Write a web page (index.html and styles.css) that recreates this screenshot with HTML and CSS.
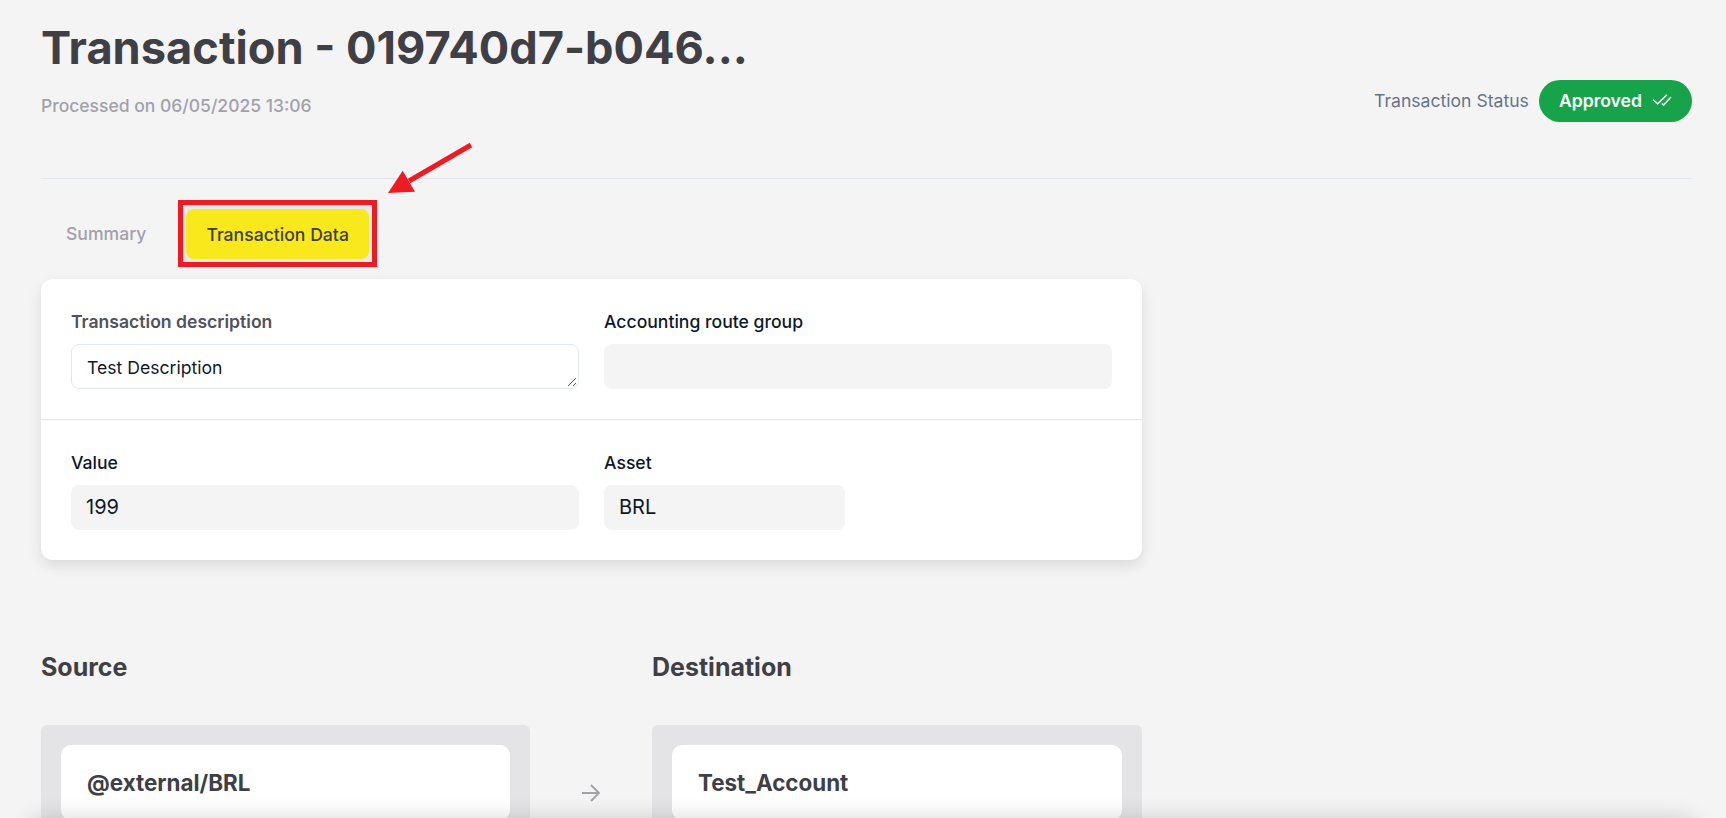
FILE: index.html
```html
<!DOCTYPE html>
<html lang="en">
<head>
<meta charset="utf-8">
<title>Transaction</title>
<link rel="stylesheet" href="styles.css">
</head>
<body>
<main class="page">
  <header class="header">
    <div class="header-main">
      <h1 class="title">Transaction - 019740d7-b046...</h1>
      <p class="processed">Processed on 06/05/2025 13:06</p>
    </div>
    <div class="status">
      <span class="status-label">Transaction Status</span>
      <span class="pill">Approved
        <svg class="pill-icon" viewBox="0 0 20 14" fill="none" stroke="#fff" stroke-width="1.5"><path d="M1 6.7L5.7 10.7L15 1.7"/><path d="M9.7 10.7L11.7 12L19 4"/></svg>
      </span>
    </div>
  </header>
  <nav class="tabs">
    <span class="tab">Summary</span>
    <span class="tab-mark"><span class="tab tab-active">Transaction Data</span></span>
  </nav>
  <section class="card">
    <div class="card-row">
      <div class="field">
        <label class="label label-muted">Transaction description</label>
        <div class="textarea">Test Description
          <svg class="grip" viewBox="0 0 10 10" fill="none" stroke="#555" stroke-width="1"><path d="M1 9l8-8M6 9l3-3"/></svg>
        </div>
      </div>
      <div class="field">
        <label class="label">Accounting route group</label>
        <div class="input input-tall"></div>
      </div>
    </div>
    <div class="card-row card-row-bottom">
      <div class="field">
        <label class="label">Value</label>
        <div class="input">199</div>
      </div>
      <div class="field">
        <label class="label">Asset</label>
        <div class="input input-short">BRL</div>
      </div>
    </div>
  </section>
  <section class="flow">
    <div class="flow-col">
      <h2 class="flow-title">Source</h2>
      <div class="panel"><div class="account">@external/BRL</div></div>
    </div>
    <div class="flow-arrow">
      <svg viewBox="0 0 18 18" fill="none" stroke="#a1a1aa" stroke-width="1.8" class="arrow-icon"><path d="M0 9h17M9 1l8 8-8 8"/></svg>
    </div>
    <div class="flow-col flow-col-end">
      <h2 class="flow-title">Destination</h2>
      <div class="panel"><div class="account">Test_Account</div></div>
    </div>
  </section>
</main>
<div class="fade"></div>
<svg class="annot" viewBox="385 140 90 56" fill="none"><path d="M471 145L409 181" stroke="#ed1c24" stroke-width="5"/><path d="M388 193L402.7 170.7L415 191.7Z" fill="#ed1c24"/></svg>
</body>
</html>
```
FILE: styles.css
```css
* { box-sizing: border-box; }
html, body { height: 100%; }
body {
  margin: 0;
  background: #f4f4f4;
  font-family: Inter, "Liberation Sans", sans-serif;
  color: #0f172a;
  overflow: hidden;
}
.page { padding: 0 34px 0 41px; }
.header {
  display: flex;
  justify-content: space-between;
  align-items: flex-start;
  height: 179px;
  border-bottom: 1px solid #e2e8f0;
}
.title {
  margin: 20px 0 0;
  font-size: 45.2px;
  line-height: 56px;
  font-weight: 700;
  color: #3f3f46;
}
.processed {
  margin: 18px 0 0;
  font-size: 17.5px;
  line-height: 24px;
  font-weight: 500;
  color: #a1a1aa;
}
.status {
  display: flex;
  align-items: center;
  gap: 10px;
  margin-top: 80px;
}
.status-label { font-size: 17.6px; color: #64748b; padding-bottom: 2px; }
.pill {
  display: flex;
  align-items: center;
  gap: 10px;
  height: 42px;
  padding: 0 20px 2px;
  border-radius: 21px;
  background: #16a34a;
  color: #fff;
  font-size: 17.6px;
  font-weight: 600;
}
.pill-icon { width: 20px; height: 14px; }
.tabs {
  display: flex;
  align-items: center;
  height: 100px;
  padding-top: 9px;
}
.tab {
  display: flex;
  align-items: center;
  height: 50px;
  padding: 0 25px;
  border-radius: 8px;
  font-size: 17.6px;
  font-weight: 500;
  color: #a1a1aa;
  white-space: nowrap;
}
.tab-mark {
  display: flex;
  margin-left: 7px;
  padding: 4px 3px 3px;
  border: 5px solid #ed1c24;
  background: #e8e8ea;
}
.tab-mark .tab { width: 183px; padding: 0 20px; }
.tab-active { background: #f9e91c; color: #3f3f46; }
.card {
  width: 1101px;
  height: 281px;
  background: #fff;
  border-radius: 12px;
  box-shadow: 0 6px 14px rgba(0,0,0,.1);
}
.card-row {
  display: grid;
  grid-template-columns: 508px 508px;
  gap: 25px;
  padding: 31px 30px 0;
  height: 141px;
  border-bottom: 1px solid #e2e8f0;
}
.card-row-bottom { border-bottom: 0; height: 140px; }
.field { display: flex; flex-direction: column; gap: 10px; }
.label { font-size: 17.6px; line-height: 24px; font-weight: 500; color: #0f172a; }
.label-muted { color: #52525b; font-weight: 600; }
.textarea, .input {
  position: relative;
  height: 45px;
  border-radius: 8px;
  font-size: 20px;
  line-height: 45px;
  padding: 0 15px;
}
.textarea { background: #fff; border: 1px solid #e2e8f0; line-height: 45px; font-size: 17.6px; }
.input { background: #f4f4f4; }
.input-short { width: 241px; }
.grip { position: absolute; right: 1px; bottom: 1px; width: 10px; height: 10px; }
.flow {
  display: flex;
  margin-top: 89px;
  width: 1101px;
}
.flow-col { width: 489px; }
.flow-col-end { width: 490px; }
.flow-title {
  margin: 0;
  font-size: 25px;
  line-height: 36px;
  font-weight: 700;
  color: #3f3f46;
}
.panel {
  margin-top: 40px;
  padding: 20px;
  background: #e4e4e7;
  border-radius: 6px;
}
.account {
  height: 75px;
  padding: 24px 26px;
  background: #fff;
  border-radius: 10px;
  font-size: 22.4px;
  line-height: 28px;
  font-weight: 700;
  color: #3f3f46;
}
.flow-arrow { width: 122px; display: flex; justify-content: center; align-items: flex-start; padding-top: 135px; }
.arrow-icon { width: 18px; height: 18px; }
.fade {
  position: fixed;
  left: 30px; right: 30px; bottom: -22px;
  height: 22px;
  border-radius: 12px;
  box-shadow: 0 0 22px rgba(0,0,0,.16);
}
.annot {
  position: absolute;
  left: 385px;
  top: 140px;
  width: 90px;
  height: 56px;
}
```
